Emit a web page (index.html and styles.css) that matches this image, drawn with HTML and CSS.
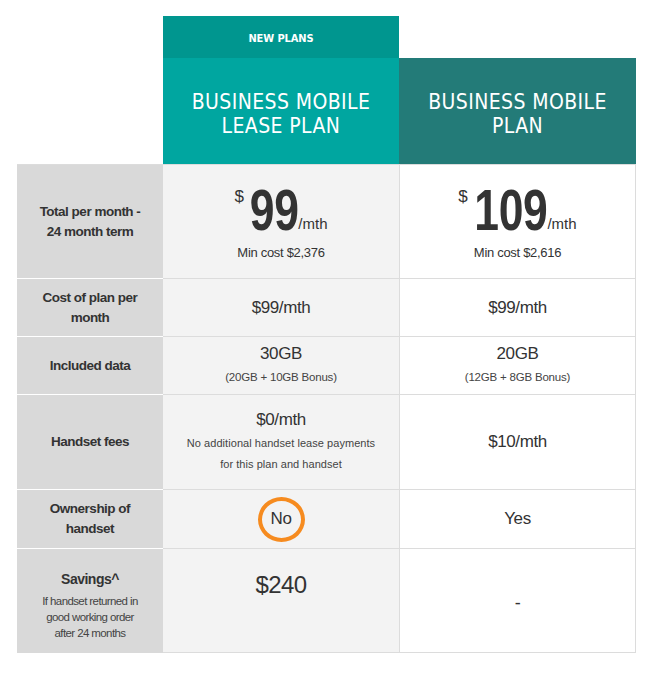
FILE: index.html
```html
<!DOCTYPE html>
<html lang="en">
<head>
<meta charset="utf-8">
<title>Business Mobile Lease Plan comparison</title>
<link rel="stylesheet" href="styles.css">
</head>
<body>
<div class="wrap">
  <div class="compare">
    <div class="blank"></div>
    <div class="badge">NEW PLANS</div>
    <div class="blank"></div>

    <div class="blank"></div>
    <div class="head head-lease">BUSINESS MOBILE<br>LEASE PLAN</div>
    <div class="head head-plan">BUSINESS MOBILE<br>PLAN</div>

    <div class="label r1">Total per month - 24 month term</div>
    <div class="cell lease r1">
      <div class="price"><span class="cur">$</span><span class="amt d2">99</span><span class="per">/mth</span></div>
      <div class="min">Min cost $2,376</div>
    </div>
    <div class="cell plan r1">
      <div class="price"><span class="cur">$</span><span class="amt d3">109</span><span class="per">/mth</span></div>
      <div class="min">Min cost $2,616</div>
    </div>

    <div class="label">Cost of plan per month</div>
    <div class="cell lease"><div class="val">$99/mth</div></div>
    <div class="cell plan"><div class="val">$99/mth</div></div>

    <div class="label">Included data</div>
    <div class="cell lease"><div class="val">30GB</div><div class="note">(20GB + 10GB Bonus)</div></div>
    <div class="cell plan"><div class="val">20GB</div><div class="note">(12GB + 8GB Bonus)</div></div>

    <div class="label">Handset fees</div>
    <div class="cell lease"><div class="val">$0/mth</div><div class="note tall">No additional handset lease payments for this plan and handset</div></div>
    <div class="cell plan"><div class="val">$10/mth</div></div>

    <div class="label">Ownership of handset</div>
    <div class="cell lease"><div class="ring">No</div></div>
    <div class="cell plan"><div class="val">Yes</div></div>

    <div class="label last">Savings^<span class="sub">If handset returned in good working order after 24 months</span></div>
    <div class="cell lease last top"><div class="val big">$240</div></div>
    <div class="cell plan last"><div class="val dash">-</div></div>
  </div>
</div>
</body>
</html>
```

FILE: styles.css
```css
* { box-sizing: border-box; }
html, body { margin: 0; padding: 0; background: #fff; }
body { font-family: "Liberation Sans", Arial, sans-serif; color: #333; }

.wrap { padding: 16px 0 0 17px; }

.compare {
  display: grid;
  grid-template-columns: 146px 236px 237px;
  grid-template-rows: 42px 106px 114px 58px 58px 95px 59px 105px;
  width: 619px;
}

.badge {
  background: #00968f;
  color: #fff;
  font-family: "DejaVu Sans Condensed", "DejaVu Sans", sans-serif;
  font-stretch: condensed;
  font-weight: bold;
  font-size: 11px;
  letter-spacing: -0.1px;
  display: flex;
  align-items: center;
  justify-content: center;
  padding-top: 2px;
}

.head {
  color: #fff;
  font-family: "DejaVu Sans Condensed", "DejaVu Sans", sans-serif;
  font-stretch: condensed;
  font-size: 21px;
  line-height: 24px;
  letter-spacing: 0.4px;
  text-align: center;
  display: flex;
  align-items: center;
  justify-content: center;
  padding-top: 6px;
}
.head-lease { background: #00a6a0; }
.head-plan { background: #237b78; }

.label {
  background: #d9d9d9;
  border-top: 1px solid #fff;
  font-weight: bold;
  font-size: 13.5px;
  letter-spacing: -0.5px;
  line-height: 20px;
  text-align: center;
  padding: 0 20px;
  display: flex;
  flex-direction: column;
  align-items: center;
  justify-content: center;
}
.label.r1 { border-top-color: #dcdcdc; }
.label .sub {
  display: block;
  font-weight: normal;
  font-size: 11.5px;
  line-height: 16px;
  color: #444;
  margin-top: 4px;
  letter-spacing: -0.6px;
}
.label.last { padding-top: 8px; font-size: 14px; }

.cell {
  border-top: 1px solid #dcdcdc;
  display: flex;
  flex-direction: column;
  align-items: center;
  justify-content: center;
  text-align: center;
}
.cell.lease { background: #f3f3f3; }
.cell.plan { background: #fff; border-left: 1px solid #dcdcdc; border-right: 1px solid #dcdcdc; }
.cell.last { border-bottom: 1px solid #dcdcdc; }
.cell.top { justify-content: flex-start; padding-top: 22px; }

.val { font-size: 17px; letter-spacing: -0.4px; line-height: 22px; }
.val.big { font-size: 24px; line-height: 28px; letter-spacing: -0.6px; }
.val.dash { font-size: 18px; padding-top: 4px; }

.note {
  font-size: 11.5px;
  letter-spacing: -0.2px;
  line-height: 22px;
  color: #444;
  margin-top: 1px;
}
.note.tall { width: 195px; font-size: 11px; letter-spacing: 0.05px; line-height: 21px; margin-top: 2px; }

.price {
  display: flex;
  align-items: flex-end;
  justify-content: center;
  margin-top: 6px;
}
.cur {
  align-self: flex-start;
  font-size: 17px;
  line-height: 17px;
  margin-right: 6px;
  margin-top: -1px;
}
.amt {
  display: inline-block;
  font-weight: bold;
  font-size: 57px;
  line-height: 42px;
  letter-spacing: -0.5px;
  color: #333;
  transform: scaleX(0.78);
}
.amt.d2 { margin: 0 -7px; }
.amt.d3 { margin: 0 -10px; }
.per {
  font-size: 15px;
  line-height: 15px;
}
.min {
  font-size: 13px;
  letter-spacing: -0.3px;
  margin-top: 14px;
}

.ring {
  width: 47px;
  height: 45px;
  border: 4px solid #f68b1f;
  border-radius: 50%;
  display: flex;
  align-items: center;
  justify-content: center;
  font-size: 17px;
  letter-spacing: -0.4px;
}
```
